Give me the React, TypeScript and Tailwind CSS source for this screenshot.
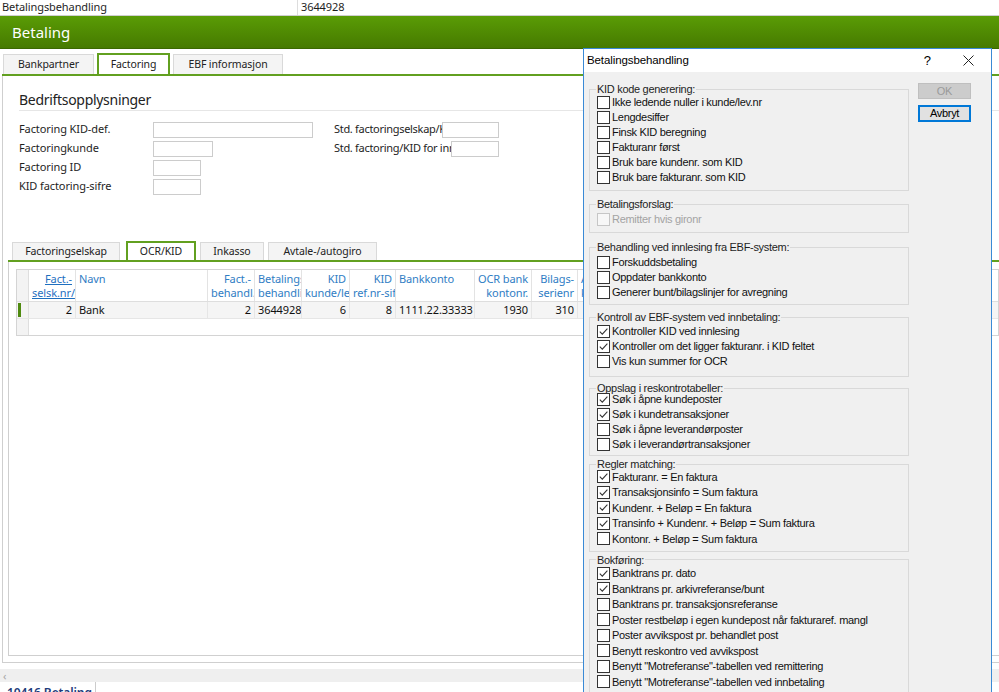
import React from 'react';

type Item = { label: string; checked?: boolean; disabled?: boolean };
type Group = { title: string; mt: string; pt: string; pb: string; row: string; items: Item[] };

const groups: Group[] = [
  {
    title: 'KID kode generering:',
    mt: 'mt-0',
    pt: 'pt-0',
    pb: 'pb-[5px]',
    row: 'h-[15px]',
    items: [
      { label: 'Ikke ledende nuller i kunde/lev.nr' },
      { label: 'Lengdesiffer' },
      { label: 'Finsk KID beregning' },
      { label: 'Fakturanr først' },
      { label: 'Bruk bare kundenr. som KID' },
      { label: 'Bruk bare fakturanr. som KID' },
    ],
  },
  {
    title: 'Betalingsforslag:',
    mt: 'mt-[7px]',
    pt: 'pt-[2px]',
    pb: 'pb-[5px]',
    row: 'h-[15px]',
    items: [{ label: 'Remitter hvis gironr', disabled: true }],
  },
  {
    title: 'Behandling ved innlesing fra EBF-system:',
    mt: 'mt-[8px]',
    pt: 'pt-[2px]',
    pb: 'pb-[4px]',
    row: 'h-[15px]',
    items: [
      { label: 'Forskuddsbetaling' },
      { label: 'Oppdater bankkonto' },
      { label: 'Generer bunt/bilagslinjer for avregning' },
    ],
  },
  {
    title: 'Kontroll av EBF-system ved innbetaling:',
    mt: 'mt-[6px]',
    pt: 'pt-[1px]',
    pb: 'pb-[7px]',
    row: 'h-[15px]',
    items: [
      { label: 'Kontroller KID ved innlesing', checked: true },
      { label: 'Kontroller om det ligger fakturanr. i KID feltet', checked: true },
      { label: 'Vis kun summer for OCR' },
    ],
  },
  {
    title: 'Oppslag i reskontrotabeller:',
    mt: 'mt-[5px]',
    pt: '-mt-[2px]',
    pb: 'pb-[3px]',
    row: 'h-[15px]',
    items: [
      { label: 'Søk i åpne kundeposter', checked: true },
      { label: 'Søk i kundetransaksjoner', checked: true },
      { label: 'Søk i åpne leverandørposter' },
      { label: 'Søk i leverandørtransaksjoner' },
    ],
  },
  {
    title: 'Regler matching:',
    mt: 'mt-[2px]',
    pt: '-mt-[1px]',
    pb: 'pb-[4px]',
    row: 'h-[15.5px]',
    items: [
      { label: 'Fakturanr. = En faktura', checked: true },
      { label: 'Transaksjonsinfo = Sum faktura', checked: true },
      { label: 'Kundenr. + Beløp = En faktura', checked: true },
      { label: 'Transinfo + Kundenr. + Beløp = Sum faktura', checked: true },
      { label: 'Kontonr. + Beløp = Sum faktura' },
    ],
  },
  {
    title: 'Bokføring:',
    mt: 'mt-[2px]',
    pt: 'pt-0',
    pb: 'pb-[4px]',
    row: 'h-[15.5px]',
    items: [
      { label: 'Banktrans pr. dato', checked: true },
      { label: 'Banktrans pr. arkivreferanse/bunt', checked: true },
      { label: 'Banktrans pr. transaksjonsreferanse' },
      { label: 'Poster restbeløp i egen kundepost når fakturaref. mangl' },
      { label: 'Poster avvikspost pr. behandlet post' },
      { label: 'Benytt reskontro ved avvikspost' },
      { label: 'Benytt "Motreferanse"-tabellen ved remittering' },
      { label: 'Benytt "Motreferanse"-tabellen ved innbetaling' },
    ],
  },
];

type Col = { w: string; h1: string; h2: string; right?: boolean; link?: boolean; v: string };

const cols: Col[] = [
  { w: 'w-[47px]', h1: 'Fact.-', h2: 'selsk.nr/', right: true, link: true, v: '2' },
  { w: 'w-[132px]', h1: 'Navn', h2: '', v: 'Bank' },
  { w: 'w-[47px]', h1: 'Fact.-', h2: 'behandl.', right: true, v: '2' },
  { w: 'w-[47px]', h1: 'Betalings-', h2: 'behandling', v: '3644928' },
  { w: 'w-[48px]', h1: 'KID', h2: 'kunde/lev', right: true, v: '6' },
  { w: 'w-[46px]', h1: 'KID', h2: 'ref.nr-siffer', right: true, v: '8' },
  { w: 'w-[79px]', h1: 'Bankkonto', h2: '', v: '1111.22.33333' },
  { w: 'w-[57px]', h1: 'OCR bank', h2: 'kontonr.', right: true, v: '1930' },
  { w: 'w-[46px]', h1: 'Bilags-', h2: 'serienr', right: true, v: '310' },
  { w: 'w-[70px]', h1: 'Avgifts-', h2: 'konto', v: '' },
  { w: 'w-[70px]', h1: 'Gebyr', h2: 'konto', v: '' },
  { w: 'w-[70px]', h1: 'Rente', h2: 'konto', v: '' },
  { w: 'w-[70px]', h1: 'Valuta', h2: '', v: '' },
];

function CheckBox({ checked, disabled }: { checked?: boolean; disabled?: boolean }) {
  return (
    <span
      className={`flex h-[13px] w-[13px] shrink-0 items-center justify-center border ${
        disabled ? 'border-[#c6c6c6] bg-[#f7f7f7]' : 'border-[#333333] bg-white'
      }`}
    >
      {checked && (
        <svg width="11" height="11" viewBox="0 0 11 11">
          <path d="M1.8 5.6 L4.3 8.1 L9.4 2.6" fill="none" stroke="#333" strokeWidth="1.1" />
        </svg>
      )}
    </span>
  );
}

function GroupBox({ g }: { g: Group }) {
  return (
    <fieldset className={`${g.mt} w-[320px] border border-[#d9d9d9] pl-[7px] ${g.pb}`}>
      <legend className="px-[1px] -ml-[1px] leading-[12px]">{g.title}</legend>
      <div className={g.pt}>
        {g.items.map((it) => (
          <div key={it.label} className={`flex ${g.row} items-center gap-[2px] whitespace-nowrap`}>
            <CheckBox checked={it.checked} disabled={it.disabled} />
            <span className={it.disabled ? 'text-[#a3a3a3]' : 'text-[#111]'}>{it.label}</span>
          </div>
        ))}
      </div>
    </fieldset>
  );
}

function Dialog() {
  return (
    <div className="absolute left-[583px] top-[48px] flex h-[660px] w-[409px] flex-col overflow-hidden border border-[#3a8ad6] bg-[#f0f0f0] font-['Liberation_Sans',Arial,sans-serif] text-[11px] tracking-[-0.3px]">
      <div className="flex h-[23px] shrink-0 items-center bg-white pl-[3px] text-[11.5px] tracking-[-0.1px] text-black">
        <span className="flex-1">Betalingsbehandling</span>
        <span className="mr-[32px] text-[13px]">?</span>
        <svg width="11" height="11" viewBox="0 0 11 11" className="mr-[17px]">
          <path d="M0.5 0.5 L10.5 10.5 M10.5 0.5 L0.5 10.5" stroke="#222" strokeWidth="1" />
        </svg>
      </div>
      <div className="flex gap-[9px] pl-[5px] pt-[11px]">
        <div className="flex flex-col">
          {groups.map((g) => (
            <GroupBox key={g.title} g={g} />
          ))}
        </div>
        <div className="flex flex-col gap-[6px]">
          <div className="flex h-[16px] w-[53px] items-center justify-center border border-[#bfbfbf] bg-[#cccccc] text-[#9a9a9a]">
            OK
          </div>
          <div className="flex h-[17px] w-[53px] items-center justify-center border-2 border-[#0078d7] bg-[#e1e1e1] text-black">
            Avbryt
          </div>
        </div>
      </div>
    </div>
  );
}

function Field({ w }: { w: string }) {
  return <div className={`h-[16px] ${w} border border-[#cccccc] bg-white`} />;
}

export default function App() {
  return (
    <div className="relative h-[692px] w-[999px] overflow-hidden bg-white font-['Noto_Sans','Open_Sans',sans-serif] text-[11px] tracking-[-0.1px] text-[#1e1e1e]">
      {/* record row */}
      <div className="flex h-[16px] border-b border-[#cfcfcf] leading-[14px]">
        <div className="w-[298px] border-r border-[#dddddd] pl-[2px]">Betalingsbehandling</div>
        <div className="pl-[3px]">3644928</div>
      </div>

      {/* title bar */}
      <div className="flex h-[33px] items-center border-b border-[#3b6800] bg-gradient-to-b from-[#5a9c06] to-[#467a00] pl-[12px] text-[15px] tracking-normal text-white">
        Betaling
      </div>

      {/* top tabs */}
      <div className="flex items-end gap-[3px] pl-[3px] pt-[4px] text-[10.5px] text-[#222]">
        <div className="flex h-[20px] w-[91px] items-center justify-center border border-b-0 border-[#d9d9d9] bg-[#f4f4f4]">
          Bankpartner
        </div>
        <div className="flex h-[21px] w-[73px] items-center justify-center border-2 border-b-0 border-[#62a020] bg-white">
          Factoring
        </div>
        <div className="flex h-[20px] w-[110px] items-center justify-center border border-b-0 border-[#d9d9d9] bg-[#f4f4f4]">
          EBF informasjon
        </div>
      </div>
      <div className="ml-[2px] h-[2px] bg-[#62a020]" />

      {/* main panel */}
      <div className="ml-[2px] flex h-[587px] flex-col border-b border-l border-[#cfcfcf] pb-[6px]">
        <div className="ml-[16px] mt-[14px] h-[21px] border-b border-[#e6e6e6] text-[14px] leading-[20px] tracking-[-0.3px] text-[#222]">
          Bedriftsopplysninger
        </div>

        <div className="ml-[16px] mt-[9px] flex">
          <div className="flex w-[315px] flex-col">
            <div className="flex h-[19px] items-center">
              <span className="w-[134px]">Factoring KID-def.</span>
              <Field w="w-[160px]" />
            </div>
            <div className="flex h-[19px] items-center">
              <span className="w-[134px]">Factoringkunde</span>
              <Field w="w-[60px]" />
            </div>
            <div className="flex h-[19px] items-center">
              <span className="w-[134px]">Factoring ID</span>
              <Field w="w-[48px]" />
            </div>
            <div className="flex h-[19px] items-center">
              <span className="w-[134px]">KID factoring-sifre</span>
              <Field w="w-[48px]" />
            </div>
          </div>
          <div className="flex flex-col">
            <div className="flex h-[19px] items-center">
              <span className="w-[108px] overflow-hidden whitespace-nowrap tracking-[-0.3px]">Std. factoringselskap/KID</span>
              <Field w="w-[57px]" />
            </div>
            <div className="flex h-[19px] items-center">
              <span className="w-[117px] overflow-hidden whitespace-nowrap tracking-[-0.3px]">Std. factoring/KID for innbetaling</span>
              <Field w="w-[48px]" />
            </div>
          </div>
        </div>

        {/* lower tabs */}
        <div className="ml-[5px] mt-[45px] flex min-h-0 flex-1 flex-col">
          <div className="flex items-end pl-[4px] text-[10.5px] text-[#222]">
            <div className="flex h-[18px] w-[108px] items-center justify-center border border-b-0 border-[#d9d9d9] bg-[#f4f4f4]">
              Factoringselskap
            </div>
            <div className="ml-[6px] flex h-[19px] w-[70px] items-center justify-center border-2 border-b-0 border-[#62a020] bg-white">
              OCR/KID
            </div>
            <div className="ml-[4px] flex h-[18px] w-[64px] items-center justify-center border border-b-0 border-[#d9d9d9] bg-[#f4f4f4]">
              Inkasso
            </div>
            <div className="ml-[4px] flex h-[18px] w-[109px] items-center justify-center border border-b-0 border-[#d9d9d9] bg-[#f4f4f4]">
              Avtale-/autogiro
            </div>
          </div>
          <div className="h-[2px] bg-[#62a020]" />
          <div className="flex-1 overflow-hidden border-b border-l border-[#cfcfcf] pl-[7px] pt-[7px]">
            <div className="flex flex-col border border-[#d4d4d4]">
              {/* header */}
              <div className="flex h-[32px] border-b border-[#dedede]">
                <div className="w-[12px] shrink-0 border-r border-[#dedede] bg-[#f3f3f3]" />
                {cols.map((c, i) => (
                  <div
                    key={i}
                    className={`${c.w} shrink-0 overflow-hidden whitespace-nowrap border-r border-[#e3e3e3] px-[3px] pt-[2px] leading-[14px] ${
                      c.right ? 'text-right' : 'text-left'
                    } ${c.link ? 'text-[#1f6fbf] underline' : 'text-[#2f7dc4]'}`}
                  >
                    <div>{c.h1}</div>
                    <div>{c.h2}</div>
                  </div>
                ))}
              </div>
              {/* data row */}
              <div className="flex h-[17px] border-b border-[#e6e6e6] bg-[#f5f5f5]">
                <div className="flex w-[12px] shrink-0 items-center border-r border-[#dedede] bg-[#f3f3f3] pl-[1px]">
                  <div className="h-[14px] w-[3px] bg-[#4f8a10]" />
                </div>
                {cols.map((c, i) => (
                  <div
                    key={i}
                    className={`${c.w} shrink-0 overflow-hidden whitespace-nowrap border-r border-[#e6e6e6] px-[3px] leading-[16px] text-[#111] ${
                      c.right ? 'text-right' : 'text-left'
                    }`}
                  >
                    {c.v}
                  </div>
                ))}
              </div>
              {/* empty row */}
              <div className="flex h-[16px] bg-white">
                <div className="w-[12px] shrink-0 border-r border-[#dedede] bg-[#f3f3f3]" />
                <div className="flex-1" />
              </div>
            </div>
          </div>
        </div>
      </div>

      {/* horizontal scroll bar */}
      <div className="mt-[6px] flex h-[13px] items-center bg-[#efefef] pl-[3px] text-[11px] leading-none text-[#a6a6a6]">
        ‹
      </div>

      {/* window tab */}
      <div className="flex">
        <div className="h-[20px] w-[96px] border-r border-[#cccccc] pl-[7px] pt-[2px] text-[12px] font-semibold text-[#1d3b7a]">
          10416 Betaling
        </div>
      </div>

      <Dialog />
    </div>
  );
}
